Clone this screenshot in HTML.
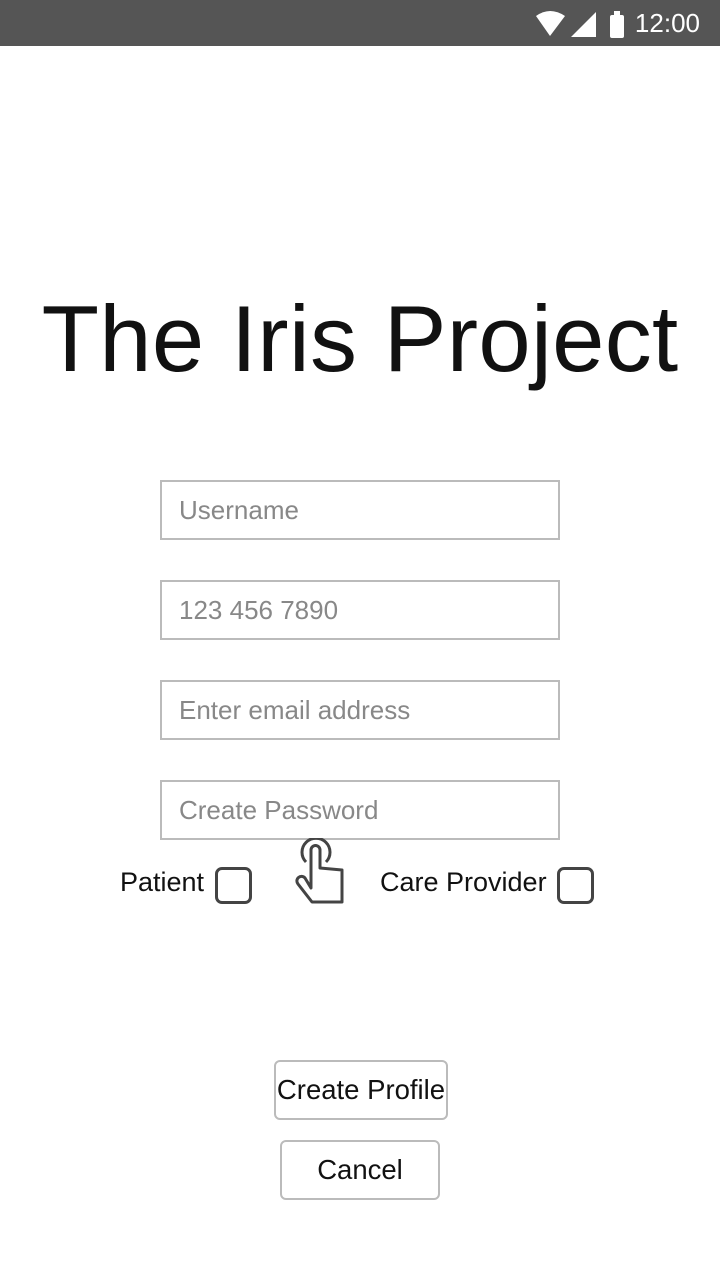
<!DOCTYPE html>
<html><head><meta charset="utf-8"><style>
*{margin:0;padding:0;box-sizing:border-box}
body{width:720px;height:1280px;background:#fff;font-family:"Liberation Sans",sans-serif;position:relative;overflow:hidden}
.sb{position:absolute;left:0;top:0;width:720px;height:46px;background:#555}
.time{position:absolute;right:20px;top:8px;color:#fff;font-size:26px}
h1{position:absolute;left:0;width:720px;top:285px;text-align:center;font-weight:normal;font-size:94px;color:#111;letter-spacing:0.3px}
.in{position:absolute;left:160px;width:400px;height:60px;border:2px solid #bbb;color:#888;font-size:26px;padding-left:17px;line-height:56px}
.lbl{position:absolute;top:867px;font-size:27px;color:#111}
.cb{position:absolute;top:867px;width:37px;height:37px;border:3px solid #444;border-radius:7px}
.btn{position:absolute;border:2px solid #bbb;border-radius:6px;font-size:27.5px;color:#111;text-align:center}
</style></head><body>
<div class="sb">
<svg style="position:absolute;left:535px;top:10px" width="100" height="28" viewBox="0 0 100 28">
<path d="M1 6 Q15 -4 30 6 L15 26 Z" fill="#fff"/>
<path d="M36 27 L61 2 L61 27 Z" fill="#fff"/>
<rect x="75" y="5" width="14" height="23" rx="2" fill="#fff"/><rect x="79" y="1" width="6" height="5" fill="#fff"/>
</svg>
<div class="time">12:00</div>
</div>
<h1>The Iris Project</h1>
<div class="in" style="top:480px">Username</div>
<div class="in" style="top:580px">123 456 7890</div>
<div class="in" style="top:680px">Enter email address</div>
<div class="in" style="top:780px">Create Password</div>
<div class="lbl" style="left:120px">Patient</div>
<div class="cb" style="left:215px"></div>
<svg style="position:absolute;left:294px;top:838px" width="54" height="68" viewBox="0 0 54 68">
<path d="M12 24 A14 14 0 1 1 32 24" fill="none" stroke="#444" stroke-width="3"/>
<path d="M17 50 L17 12 A4.5 4.5 0 0 1 26 12 L26 30 L48 32 L48 64 L18 64 L4 46 A4 4 0 0 1 11 40 Z" fill="#fff" stroke="#444" stroke-width="3" stroke-linejoin="round"/>
</svg>
<div class="lbl" style="left:380px">Care Provider</div>
<div class="cb" style="left:557px"></div>
<div class="btn" style="left:274px;top:1060px;width:174px;height:60px;line-height:56px">Create Profile</div>
<div class="btn" style="left:280px;top:1140px;width:160px;height:60px;line-height:56px">Cancel</div>
</body></html>
